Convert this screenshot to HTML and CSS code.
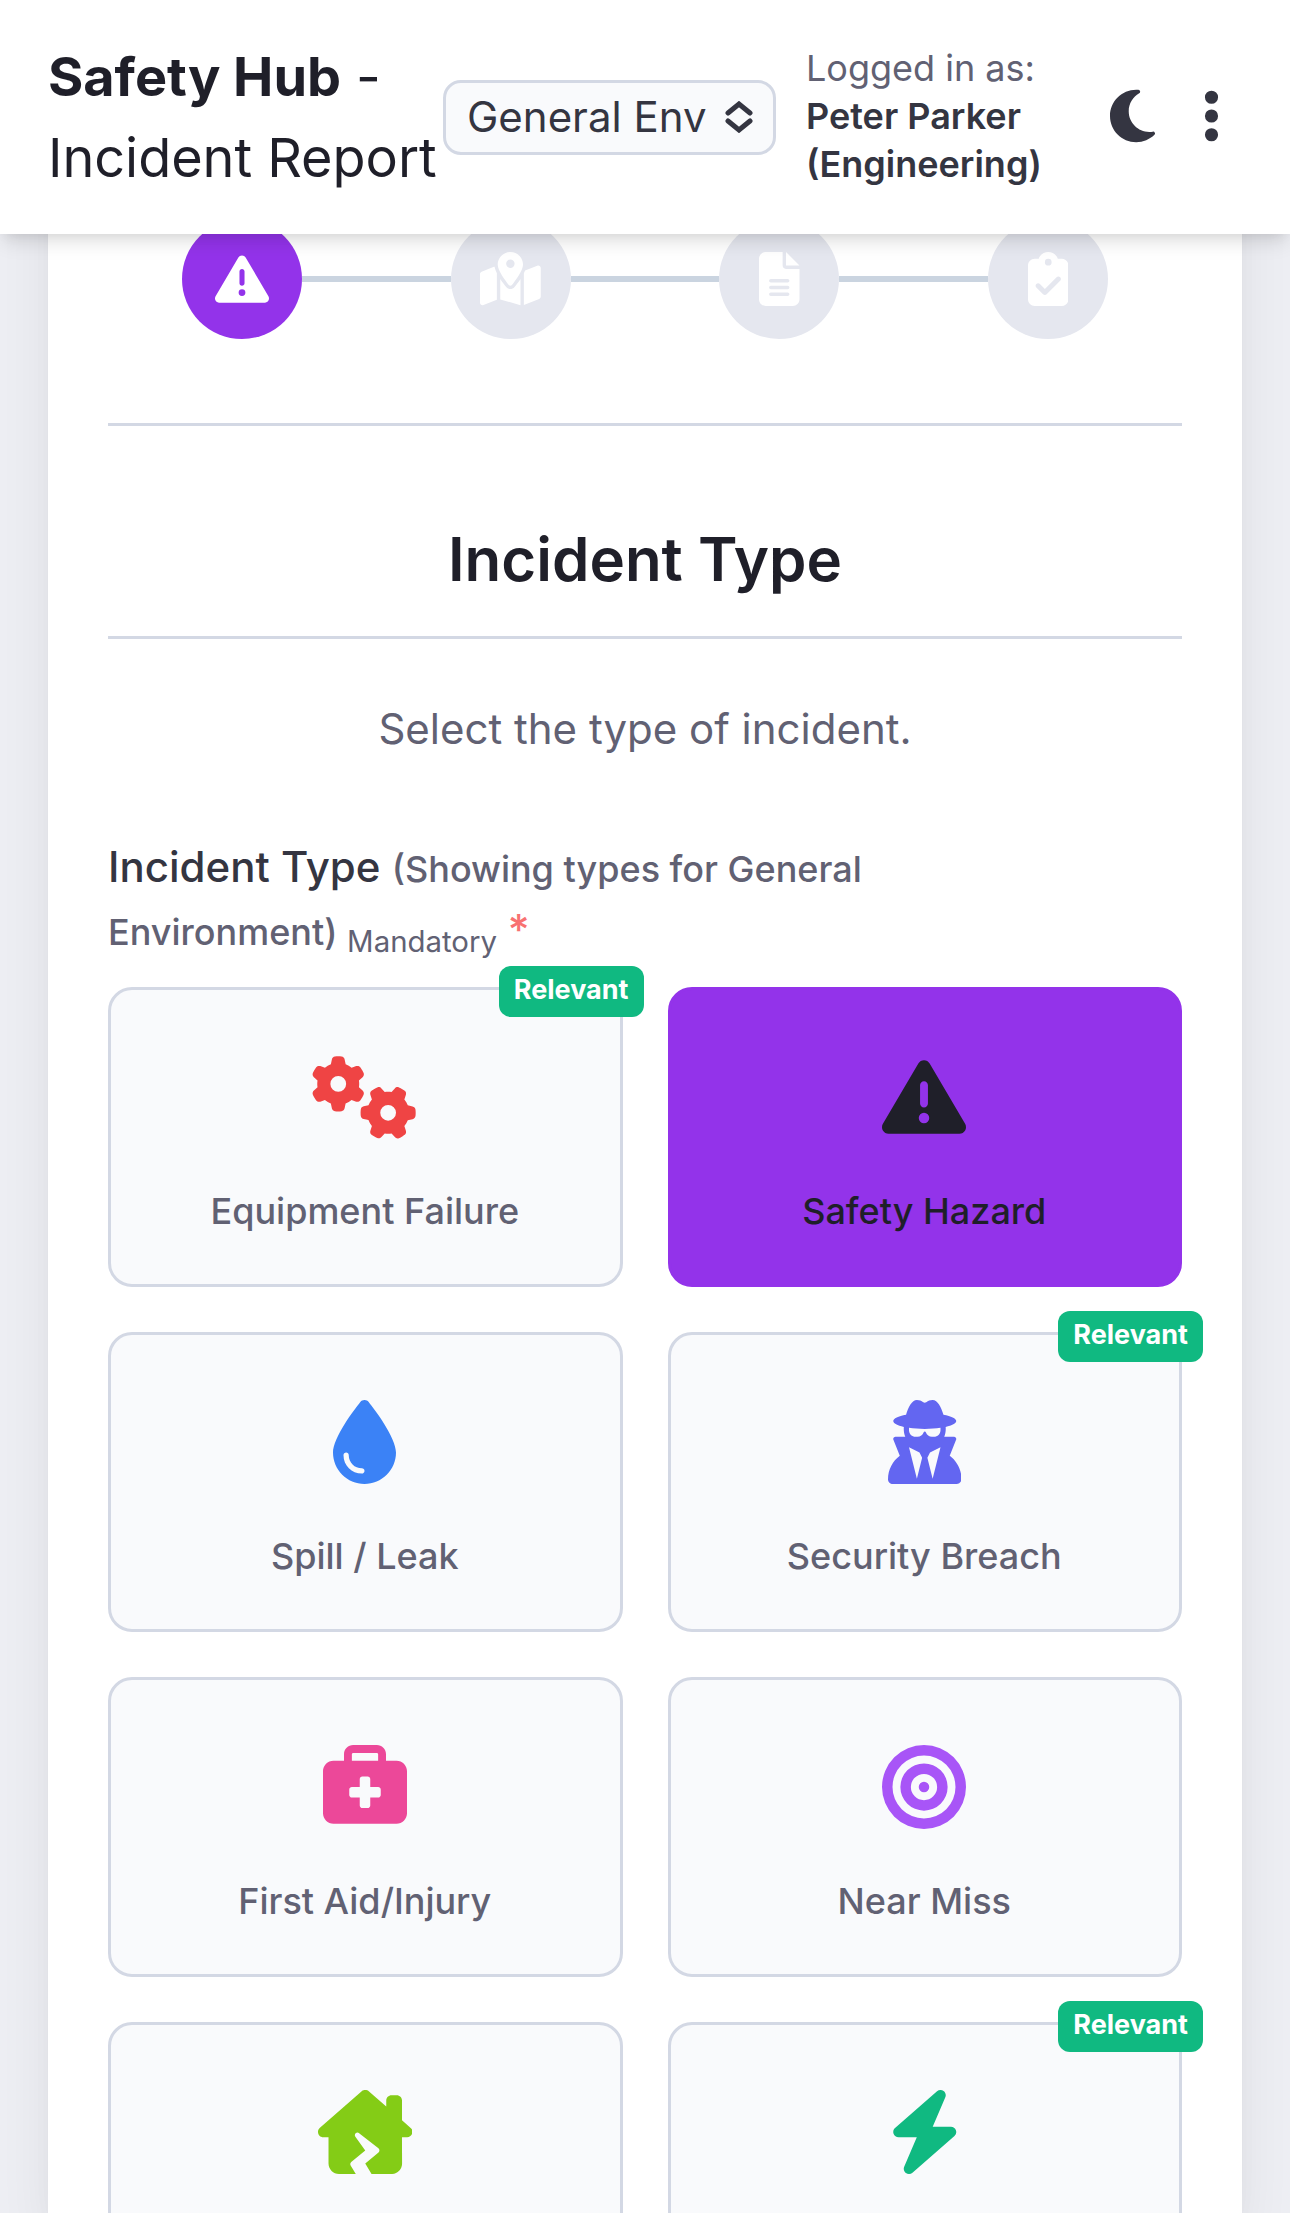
FILE: index.html
```html
<!DOCTYPE html>
<html lang="en">
<head>
<meta charset="utf-8">
<title>Safety Hub - Incident Report</title>
<link rel="stylesheet" href="styles.css">
</head>
<body>
<header class="topbar">
  <h1 class="brand"><strong>Safety Hub</strong> -<br>Incident Report</h1>
  <button class="env-select" type="button">
    <span>General Env</span>
    <svg class="env-caret" viewBox="0 0 28 32"><path d="M3 12 14 3 25 12M3 20l11 9 11-9"/></svg>
  </button>
  <div class="user">Logged in as:<br><strong>Peter Parker<br>(Engineering)</strong></div>
  <svg class="action moon" viewBox="0 0 384 512"><path d="M223.5 32C100 32 0 132.3 0 256S100 480 223.5 480c60.6 0 115.5-24.2 155.8-63.4c5-4.9 6.3-12.5 3.1-18.7s-10.1-9.7-17-8.5c-9.8 1.7-19.8 2.6-30.1 2.6c-96.9 0-175.5-78.8-175.5-176c0-65.8 36-123.1 89.3-153.3c6.1-3.5 9.2-10.5 7.7-17.3s-7.3-11.9-14.3-12.5c-6.3-.5-12.6-.8-19-.8z"/></svg>
  <svg class="action more" viewBox="0 0 128 512"><path d="M64 360a56 56 0 1 0 0 112 56 56 0 1 0 0-112zm0-160a56 56 0 1 0 0 112 56 56 0 1 0 0-112zM120 96A56 56 0 1 0 8 96a56 56 0 1 0 112 0z"/></svg>
</header>

<main class="sheet">
  <nav class="steps">
    <span class="step active"><svg viewBox="0 0 512 512"><path d="M256 32c14.2 0 27.3 7.5 34.5 19.8l216 368c7.3 12.4 7.3 27.7 .2 40.1S486.3 480 472 480H40c-14.3 0-27.6-7.7-34.7-20.1s-7-27.8 .2-40.1l216-368C228.7 39.5 241.8 32 256 32zm0 128c-13.3 0-24 10.7-24 24V296c0 13.3 10.7 24 24 24s24-10.7 24-24V184c0-13.3-10.7-24-24-24zm32 224a32 32 0 1 0 -64 0 32 32 0 1 0 64 0z"/></svg></span>
    <span class="track"></span>
    <span class="step"><svg viewBox="0 0 576 512"><path d="M408 120c0 54.6-73.1 151.9-105.2 192c-7.7 9.6-22 9.6-29.6 0C241.1 271.9 168 174.6 168 120C168 53.7 221.7 0 288 0s120 53.7 120 120zm8 80.4c3.5-6.9 6.7-13.8 9.6-20.6c.5-1.2 1-2.5 1.5-3.7l116-46.4C558.9 123.4 576 135 576 152V422.8c0 9.8-6 18.6-15.1 22.3L416 503V200.4zM137.6 138.3c2.4 14.1 7.2 28.3 12.8 41.5c2.9 6.8 6.1 13.7 9.6 20.6V451.8L32.9 502.7C17.1 509 0 497.4 0 480.4V209.6c0-9.8 6-18.6 15.1-22.3l122.6-49zM327.8 332c13.9-17.4 35.7-45.7 56.2-77V504.3L192 449.4V255c20.5 31.3 42.3 59.6 56.2 77c20.5 25.6 59.1 25.6 79.6 0zM288 152a40 40 0 1 0 0-80 40 40 0 1 0 0 80z"/></svg></span>
    <span class="track"></span>
    <span class="step"><svg viewBox="0 0 384 512"><path d="M64 0C28.7 0 0 28.7 0 64V448c0 35.3 28.7 64 64 64H320c35.3 0 64-28.7 64-64V160H256c-17.7 0-32-14.3-32-32V0H64zM256 0V128H384L256 0zM112 256H272c8.8 0 16 7.2 16 16s-7.2 16-16 16H112c-8.8 0-16-7.2-16-16s7.2-16 16-16zm0 64H272c8.8 0 16 7.2 16 16s-7.2 16-16 16H112c-8.8 0-16-7.2-16-16s7.2-16 16-16zm0 64H272c8.8 0 16 7.2 16 16s-7.2 16-16 16H112c-8.8 0-16-7.2-16-16s7.2-16 16-16z"/></svg></span>
    <span class="track"></span>
    <span class="step"><svg viewBox="0 0 384 512"><path d="M192 0c-41.8 0-77.4 26.7-90.5 64H64C28.7 64 0 92.7 0 128V448c0 35.3 28.7 64 64 64H320c35.3 0 64-28.7 64-64V128c0-35.3-28.7-64-64-64H282.5C269.4 26.7 233.8 0 192 0zm0 64a32 32 0 1 1 0 64 32 32 0 1 1 0-64zM305 273L177 401c-9.4 9.4-24.6 9.4-33.9 0L79 337c-9.4-9.4-9.4-24.6 0-33.9s24.6-9.4 33.9 0l47 47L271 239c9.4-9.4 24.6-9.4 33.9 0s9.4 24.6 0 33.9z"/></svg></span>
  </nav>

  <h2 class="heading">Incident Type</h2>
  <p class="intro">Select the type of incident.</p>

  <div class="label">
    <div>Incident Type <span class="note">(Showing types for General</span></div>
    <div class="second"><span class="note">Environment)</span> <sub class="mandatory">Mandatory</sub> <span class="star">*</span></div>
  </div>

  <div class="grid">
    <div class="card"><span class="badge">Relevant</span>
      <svg class="icon red" viewBox="0 0 640 512"><path d="M308.5 135.3c7.1-6.3 9.9-16.2 6.2-25c-2.3-5.3-4.8-10.5-7.6-15.5L304 89.4c-3-5-6.3-9.9-9.8-14.6c-5.7-7.6-15.7-10.1-24.7-7.1l-28.2 9.3c-10.7-8.8-23-16-36.2-20.9L199 27.1c-1.9-9.3-9.1-16.7-18.5-17.8C173.9 8.4 167.2 8 160.4 8h-.7c-6.8 0-13.5 .4-20.1 1.2c-9.4 1.1-16.6 8.6-18.5 17.8L115 56.1c-13.3 5-25.5 12.1-36.2 20.9L50.5 67.8c-9-3-19-.5-24.7 7.1c-3.5 4.7-6.8 9.6-9.9 14.6l-3 5.3c-2.8 5-5.3 10.2-7.6 15.6c-3.7 8.7-.9 18.6 6.2 25l22.2 19.8C32.6 161.9 32 168.9 32 176s.6 14.1 1.7 20.9L11.5 216.7c-7.1 6.3-9.9 16.2-6.2 25c2.3 5.3 4.8 10.5 7.6 15.6l3 5.2c3 5.1 6.3 9.9 9.9 14.6c5.7 7.6 15.7 10.1 24.7 7.1l28.2-9.3c10.7 8.8 23 16 36.2 20.9l6.1 29.1c1.9 9.3 9.1 16.7 18.5 17.8c6.7 .8 13.5 1.2 20.4 1.2s13.7-.4 20.4-1.2c9.4-1.1 16.6-8.6 18.5-17.8l6.1-29.1c13.3-5 25.5-12.1 36.2-20.9l28.2 9.3c9 3 19 .5 24.7-7.1c3.5-4.7 6.8-9.5 9.8-14.6l3.1-5.4c2.8-5 5.3-10.2 7.6-15.5c3.7-8.7 .9-18.6-6.2-25l-22.2-19.8c1.1-6.8 1.7-13.8 1.7-20.9s-.6-14.1-1.7-20.9l22.2-19.8zM112 176a48 48 0 1 1 96 0 48 48 0 1 1 -96 0zM504.7 500.5c6.3 7.1 16.2 9.9 25 6.2c5.3-2.3 10.5-4.8 15.5-7.6l5.4-3.1c5-3 9.9-6.3 14.6-9.8c7.6-5.7 10.1-15.7 7.1-24.7l-9.3-28.2c8.8-10.7 16-23 20.9-36.2l29.1-6.1c9.3-1.9 16.7-9.1 17.8-18.5c.8-6.7 1.2-13.5 1.2-20.4s-.4-13.7-1.2-20.4c-1.1-9.4-8.6-16.6-17.8-18.5L583.9 307c-5-13.3-12.1-25.5-20.9-36.2l9.3-28.2c3-9 .5-19-7.1-24.7c-4.7-3.5-9.6-6.8-14.6-9.9l-5.3-3c-5-2.8-10.2-5.3-15.6-7.6c-8.7-3.7-18.6-.9-25 6.2l-19.8 22.2c-6.8-1.1-13.8-1.7-20.9-1.7s-14.1 .6-20.9 1.7l-19.8-22.2c-6.3-7.1-16.2-9.9-25-6.2c-5.3 2.3-10.5 4.8-15.6 7.6l-5.2 3c-5.1 3-9.9 6.3-14.6 9.9c-7.6 5.7-10.1 15.7-7.1 24.7l9.3 28.2c-8.8 10.7-16 23-20.9 36.2L315.1 313c-9.3 1.9-16.7 9.1-17.8 18.5c-.8 6.7-1.2 13.5-1.2 20.4s.4 13.7 1.2 20.4c1.1 9.4 8.6 16.6 17.8 18.5l29.1 6.1c5 13.3 12.1 25.5 20.9 36.2l-9.3 28.2c-3 9-.5 19 7.1 24.7c4.7 3.5 9.5 6.8 14.6 9.8l5.4 3.1c5 2.8 10.2 5.3 15.5 7.6c8.7 3.7 18.6 .9 25-6.2l19.8-22.2c6.8 1.1 13.8 1.7 20.9 1.7s14.1-.6 20.9-1.7l19.8 22.2zM464 304a48 48 0 1 1 0 96 48 48 0 1 1 0-96z"/></svg>
      <span class="name">Equipment Failure</span></div>
    <div class="card selected">
      <svg class="icon" viewBox="0 0 512 512"><path d="M256 32c14.2 0 27.3 7.5 34.5 19.8l216 368c7.3 12.4 7.3 27.7 .2 40.1S486.3 480 472 480H40c-14.3 0-27.6-7.7-34.7-20.1s-7-27.8 .2-40.1l216-368C228.7 39.5 241.8 32 256 32zm0 128c-13.3 0-24 10.7-24 24V296c0 13.3 10.7 24 24 24s24-10.7 24-24V184c0-13.3-10.7-24-24-24zm32 224a32 32 0 1 0 -64 0 32 32 0 1 0 64 0z"/></svg>
      <span class="name">Safety Hazard</span></div>
    <div class="card">
      <svg class="icon blue" viewBox="0 0 384 512"><path d="M192 512C86 512 0 426 0 320C0 228.8 130.2 57.7 166.6 11.7C172.6 4.2 181.5 0 191.1 0h1.8c9.6 0 18.5 4.2 24.5 11.7C253.8 57.7 384 228.8 384 320c0 106-86 192-192 192zM96 336c0-8.8-7.2-16-16-16s-16 7.2-16 16c0 61.9 50.1 112 112 112c8.8 0 16-7.2 16-16s-7.2-16-16-16c-44.2 0-80-35.8-80-80z"/></svg>
      <span class="name">Spill / Leak</span></div>
    <div class="card"><span class="badge">Relevant</span>
      <svg class="icon indigo" viewBox="0 0 448 512"><path d="M224 16c-6.7 0-10.8-2.8-15.5-6.1C201.9 5.4 194 0 176 0c-30.5 0-52 43.7-66 89.4C62.7 98.1 32 112.2 32 128c0 14.3 25 27.1 64.6 35.9c-.4 4-.6 8-.6 12.1c0 17 3.3 33.2 9.3 48H45.4C38 224 32 230 32 237.4c0 1.7 .3 3.4 1 5l38.8 96.9C28.2 371.8 0 423.8 0 482.3C0 498.7 13.3 512 29.7 512H418.3c16.4 0 29.7-13.3 29.7-29.7c0-58.5-28.2-110.4-71.7-143L415 242.4c.6-1.6 1-3.3 1-5c0-7.4-6-13.4-13.4-13.4H342.7c6-14.8 9.3-31 9.3-48c0-4.1-.2-8.1-.6-12.1C391 155.1 416 142.3 416 128c0-15.8-30.7-29.9-78-38.6C324 43.7 302.5 0 272 0c-18 0-25.9 5.4-32.5 9.9c-4.8 3.3-8.8 6.1-15.5 6.1zm56 208H267.6c-16.5 0-31.1-10.6-36.3-26.2c-2.3-7-12.2-7-14.5 0c-5.2 15.6-19.9 26.2-36.3 26.2H168c-22.1 0-40-17.9-40-40V169.6c28.2 4.1 61 6.4 96 6.4s67.8-2.3 96-6.4V184c0 22.1-17.9 40-40 40zm-88 96l16 32L176 480 128 288l64 32zm128-32L272 480 240 352l16-32 64-32z"/></svg>
      <span class="name">Security Breach</span></div>
    <div class="card">
      <svg class="icon pink" viewBox="0 0 512 512"><path d="M184 48H328c4.4 0 8 3.6 8 8V96H176V56c0-4.4 3.6-8 8-8zm-56 8V96H64C28.7 96 0 124.7 0 160V416c0 35.3 28.7 64 64 64H448c35.3 0 64-28.7 64-64V160c0-35.3-28.7-64-64-64H384V56c0-30.9-25.1-56-56-56H184c-30.9 0-56 25.1-56 56zm96 152c0-8.8 7.2-16 16-16h32c8.8 0 16 7.2 16 16v48h48c8.8 0 16 7.2 16 16v32c0 8.8-7.2 16-16 16H288v48c0 8.8-7.2 16-16 16H240c-8.8 0-16-7.2-16-16V320H176c-8.8 0-16-7.2-16-16V272c0-8.8 7.2-16 16-16h48V208z"/></svg>
      <span class="name">First Aid/Injury</span></div>
    <div class="card">
      <svg class="icon purple" viewBox="0 0 512 512"><path d="M448 256A192 192 0 1 0 64 256a192 192 0 1 0 384 0zM0 256a256 256 0 1 1 512 0A256 256 0 1 1 0 256zm256 80a80 80 0 1 0 0-160 80 80 0 1 0 0 160zm0-224a144 144 0 1 1 0 288 144 144 0 1 1 0-288zM224 256a32 32 0 1 1 64 0 32 32 0 1 1 -64 0z"/></svg>
      <span class="name">Near Miss</span></div>
    <div class="card">
      <svg class="icon lime" viewBox="0 0 576 512"><path d="M575.8 255.5c0 18-15 32.1-32 32.1h-32l.7 160.2c.2 35.4-28.5 64.3-64 64.3H326.4L288 448l80.8-67.3c7.8-6.5 7.6-18.6-.4-24.9L250.6 263.2c-14.6-11.5-33.8 7-22.8 22L288 368l-85.5 71.2c-6.1 5-7.5 13.8-3.5 20.5L230.4 512H128.1c-35.3 0-64-28.7-64-64V287.6H32c-18 0-32-14-32-32.1c0-9 3-17 10-24L266.4 8c7-7 15-8 22-8s15 2 21 7L416 100.7V64c0-17.7 14.3-32 32-32h32c17.7 0 32 14.3 32 32V185l52.8 46.4c8 7 12 15 11 24z"/></svg></div>
    <div class="card"><span class="badge">Relevant</span>
      <svg class="icon green" viewBox="0 0 448 512"><path d="M349.4 44.6c5.9-13.7 1.5-29.7-10.6-38.5s-28.6-8-39.9 1.8l-256 224c-10 8.8-13.6 22.9-8.9 35.3S50.7 288 64 288H175.5L98.6 467.4c-5.9 13.7-1.5 29.7 10.6 38.5s28.6 8 39.9-1.8l256-224c10-8.8 13.6-22.9 8.9-35.3s-16.6-20.7-30-20.7H272.5L349.4 44.6z"/></svg></div>
  </div>
</main>
</body>
</html>
```
FILE: styles.css
```css
* { box-sizing: border-box; }

html { overflow: hidden; }

body {
  margin: 0;
  height: 2213px;
  overflow: hidden;
  background: #eeeff4;
  color: #343541;
  font-family: Inter, "Liberation Sans", sans-serif;
  font-size: 42px;
  line-height: 1.5;
}

svg { display: block; fill: currentColor; fill-rule: evenodd; }

/* Top bar */
.topbar {
  position: relative;
  z-index: 2;
  display: flex;
  align-items: center;
  height: 234px;
  padding: 0 71px 0 48px;
  background: #fff;
  box-shadow: 0 12px 18px -3px rgba(0, 0, 0, .1), 0 6px 12px -6px rgba(0, 0, 0, .1);
}

.brand {
  flex: none;
  width: 395px;
  margin: 0;
  color: #1f1f29;
  font-size: 54px;
  font-weight: 400;
  line-height: 81px;
  letter-spacing: -.05px;
  white-space: nowrap;
}
.brand strong { font-weight: 700; }

.env-select {
  display: flex;
  align-items: center;
  justify-content: space-between;
  width: 333px;
  height: 75px;
  padding: 0 20px 1px 21px;
  border: 3px solid #d3d8e4;
  border-radius: 18px;
  background: #f9fafc;
  color: inherit;
  font: 400 42px/1.5 Inter, "Liberation Sans", sans-serif;
  white-space: nowrap;
}
.env-caret {
  width: 28px;
  height: 32px;
  fill: none;
  stroke: currentColor;
  stroke-width: 5;
  stroke-linecap: round;
  stroke-linejoin: miter;
}

.user {
  width: 304px;
  padding: 0 0 3px 30px;
  color: #616173;
  font-size: 36px;
  line-height: 48px;
  white-space: nowrap;
}
.user strong { color: #343541; font-weight: 600; }

.action { flex: none; height: 60px; margin-bottom: 3px; }
.moon { width: 45px; margin-left: 30px; }
.more { width: 15px; margin-left: auto; }

/* Form sheet, scrolled partly under the bar */
.sheet {
  width: 1194px;
  height: 2179px;
  margin: -200px auto 0;
  padding: 185px 60px 0;
  background: #fff;
  box-shadow: 0 60px 75px -15px rgba(0, 0, 0, .1), 0 24px 30px -18px rgba(0, 0, 0, .1);
}

.steps {
  display: flex;
  align-items: center;
  height: 207px;
  padding: 0 74px 84px;
  border-bottom: 3px solid #d3d8e4;
}
.step {
  display: grid;
  place-items: center;
  flex: none;
  width: 120px;
  height: 120px;
  border-radius: 50%;
  background: #e5e7ef;
  color: #fff;
}
.step svg { height: 54px; }
.step.active { background: #9333ea; }
.track { flex: 1; height: 6px; background: #cad4e0; }

.heading {
  height: 213px;
  margin: 0;
  padding-top: 88px;
  border-bottom: 3px solid #d3d8e4;
  color: #1f1f29;
  font-size: 60px;
  font-weight: 600;
  line-height: 90px;
  text-align: center;
}
.intro {
  margin: 58px 0 75px;
  color: #616173;
  text-align: center;
}

.label {
  height: 152px;
  font-weight: 500;
  line-height: 63px;
}
.second { font-size: 36px; }
.note { color: #616173; font-size: 36px; }
.mandatory {
  position: relative;
  top: 7px;
  color: #616173;
  font-size: 29.4px;
  font-weight: 400;
  line-height: 0;
  vertical-align: baseline;
}
.star {
  margin-left: 1px;
  color: #f87171;
  font-size: 42px;
  font-weight: 500;
  line-height: 0;
}

/* Type cards; the last row runs off the bottom of the view */
.grid {
  display: grid;
  grid-template-columns: 1fr 1fr;
  grid-auto-rows: 300px;
  gap: 45px;
}
.card {
  position: relative;
  display: flex;
  flex-direction: column;
  align-items: center;
  gap: 45px;
  padding: 65px 1px 0 0;
  border: 3px solid #d3d8e4;
  border-radius: 24px;
  background: #f9fafc;
  color: #616173;
}
.card.selected { border-color: #9333ea; background: #9333ea; color: #1f1f29; }
.icon { height: 84px; }
.name { font-size: 36px; font-weight: 500; line-height: 54px; }

.badge {
  position: absolute;
  top: -24px;
  right: -24px;
  height: 51px;
  padding: 4px 15px 0;
  border-radius: 12px;
  background: #10b981;
  color: #fff;
  font-size: 27px;
  font-weight: 700;
  line-height: 40.5px;
}

.red { color: #ef4444; }
.blue { color: #3b82f6; }
.indigo { color: #6366f1; }
.pink { color: #ec4899; }
.purple { color: #a855f7; }
.lime { color: #84cc16; }
.green { color: #10b981; }
```
